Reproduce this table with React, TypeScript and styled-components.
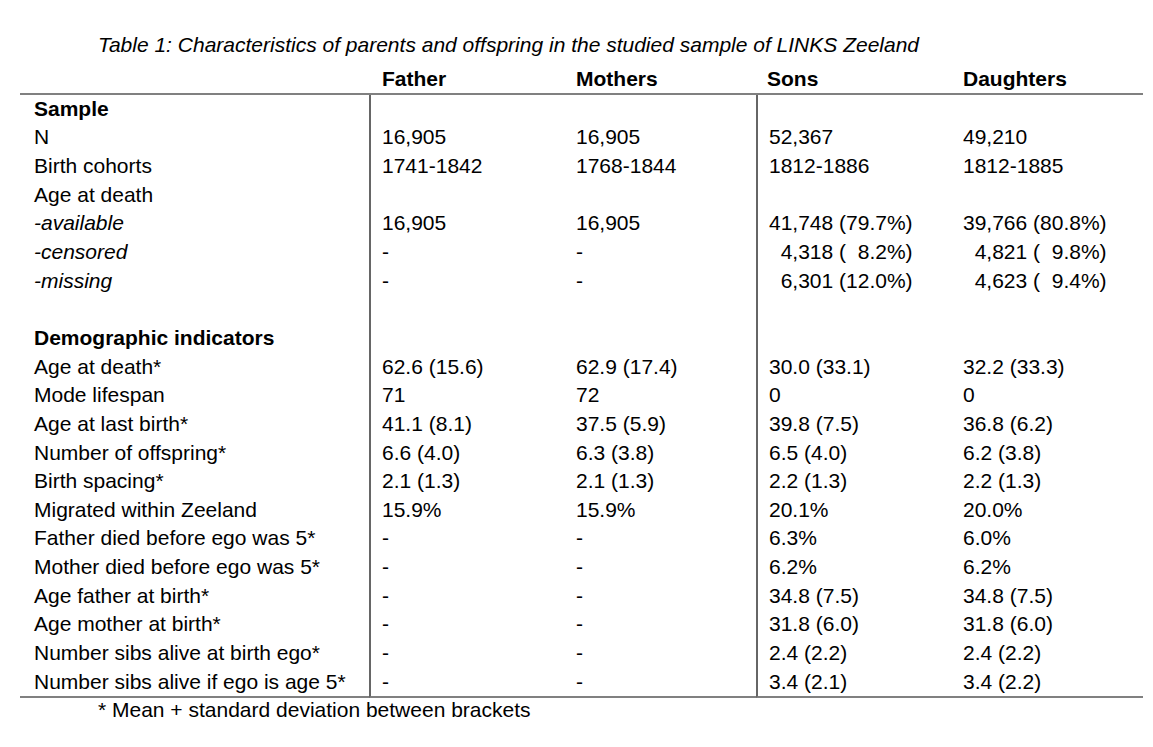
import React from "react";
import styled, { createGlobalStyle } from "styled-components";

const GlobalStyle = createGlobalStyle`
  html, body {
    margin: 0;
    padding: 0;
    background: #ffffff;
  }
  body {
    font-family: "Liberation Sans", Arial, sans-serif;
    color: #000000;
  }
`;

const ROW = "28.65px";

const Page = styled.div`
  padding: 31px 10px 0 20px;
  width: 1123px;
  font-size: 21px;
`;

const Caption = styled.div`
  font-style: italic;
  line-height: ${ROW};
  padding-left: 78px;
  margin-bottom: 4px;
  white-space: nowrap;
`;

const Table = styled.table`
  width: 1123px;
  border-collapse: separate;
  border-spacing: 0;
  table-layout: fixed;
`;

const Th = styled.th<{ $first?: boolean; $tight?: boolean }>`
  text-align: left;
  font-weight: bold;
  padding: 0 0 0 ${(p) => (p.$first ? "14px" : p.$tight ? "11px" : "13px")};
  height: 29px;
  line-height: 29px;
  border-bottom: 2px solid #808080;
  white-space: nowrap;
  box-sizing: border-box;
`;

type TdProps = {
  $label?: boolean;
  $divider?: boolean;
  $bold?: boolean;
  $italic?: boolean;
  $last?: boolean;
};

const Td = styled.td<TdProps>`
  padding: 0 0 0 ${(p) => (p.$label ? "14px" : p.$divider ? "11px" : "13px")};
  height: ${ROW};
  line-height: ${ROW};
  white-space: pre;
  box-sizing: border-box;
  font-weight: ${(p) => (p.$bold ? "bold" : "normal")};
  font-style: ${(p) => (p.$italic ? "italic" : "normal")};
  border-left: ${(p) => (p.$divider ? "2px solid #666666" : "none")};
  border-bottom: ${(p) => (p.$last ? "2px solid #808080" : "none")};
  vertical-align: middle;
`;

const Footnote = styled.div`
  line-height: ${ROW};
  margin-top: -2px;
  padding-left: 78px;
  white-space: nowrap;
`;

type RowData = {
  label: string;
  bold?: boolean;
  italic?: boolean;
  values?: [string, string, string, string];
};

const F = "\u2007";

const rows: RowData[] = [
  { label: "Sample", bold: true },
  { label: "N", values: ["16,905", "16,905", "52,367", "49,210"] },
  { label: "Birth cohorts", values: ["1741-1842", "1768-1844", "1812-1886", "1812-1885"] },
  { label: "Age at death" },
  { label: "-available", italic: true, values: ["16,905", "16,905", "41,748 (79.7%)", "39,766 (80.8%)"] },
  { label: "-censored", italic: true, values: ["-", "-", `${F}4,318 (${F}8.2%)`, `${F}4,821 (${F}9.8%)`] },
  { label: "-missing", italic: true, values: ["-", "-", `${F}6,301 (12.0%)`, `${F}4,623 (${F}9.4%)`] },
  { label: "" },
  { label: "Demographic indicators", bold: true },
  { label: "Age at death*", values: ["62.6 (15.6)", "62.9 (17.4)", "30.0 (33.1)", "32.2 (33.3)"] },
  { label: "Mode lifespan", values: ["71", "72", "0", "0"] },
  { label: "Age at last birth*", values: ["41.1 (8.1)", "37.5 (5.9)", "39.8 (7.5)", "36.8 (6.2)"] },
  { label: "Number of offspring*", values: ["6.6 (4.0)", "6.3 (3.8)", "6.5 (4.0)", "6.2 (3.8)"] },
  { label: "Birth spacing*", values: ["2.1 (1.3)", "2.1 (1.3)", "2.2 (1.3)", "2.2 (1.3)"] },
  { label: "Migrated within Zeeland", values: ["15.9%", "15.9%", "20.1%", "20.0%"] },
  { label: "Father died before ego was 5*", values: ["-", "-", "6.3%", "6.0%"] },
  { label: "Mother died before ego was 5*", values: ["-", "-", "6.2%", "6.2%"] },
  { label: "Age father at birth*", values: ["-", "-", "34.8 (7.5)", "34.8 (7.5)"] },
  { label: "Age mother at birth*", values: ["-", "-", "31.8 (6.0)", "31.8 (6.0)"] },
  { label: "Number sibs alive at birth ego*", values: ["-", "-", "2.4 (2.2)", "2.4 (2.2)"] },
  { label: "Number sibs alive if ego is age 5*", values: ["-", "-", "3.4 (2.1)", "3.4 (2.2)"] },
];

export default function App() {
  return (
    <>
      <GlobalStyle />
      <Page>
        <Caption>
          Table 1: Characteristics of parents and offspring in the studied sample of LINKS Zeeland
        </Caption>
        <Table>
          <colgroup>
            <col style={{ width: 349 }} />
            <col style={{ width: 194 }} />
            <col style={{ width: 193 }} />
            <col style={{ width: 194 }} />
            <col style={{ width: 193 }} />
          </colgroup>
          <thead>
            <tr>
              <Th $first></Th>
              <Th>Father</Th>
              <Th>Mothers</Th>
              <Th $tight>Sons</Th>
              <Th>Daughters</Th>
            </tr>
          </thead>
          <tbody>
            {rows.map((r, i) => {
              const last = i === rows.length - 1;
              const v = r.values ?? ["", "", "", ""];
              return (
                <tr key={i}>
                  <Td $label $bold={r.bold} $italic={r.italic} $last={last}>
                    {r.label}
                  </Td>
                  <Td $divider $last={last}>{v[0]}</Td>
                  <Td $last={last}>{v[1]}</Td>
                  <Td $divider $last={last}>{v[2]}</Td>
                  <Td $last={last}>{v[3]}</Td>
                </tr>
              );
            })}
          </tbody>
        </Table>
        <Footnote>* Mean + standard deviation between brackets</Footnote>
      </Page>
    </>
  );
}
